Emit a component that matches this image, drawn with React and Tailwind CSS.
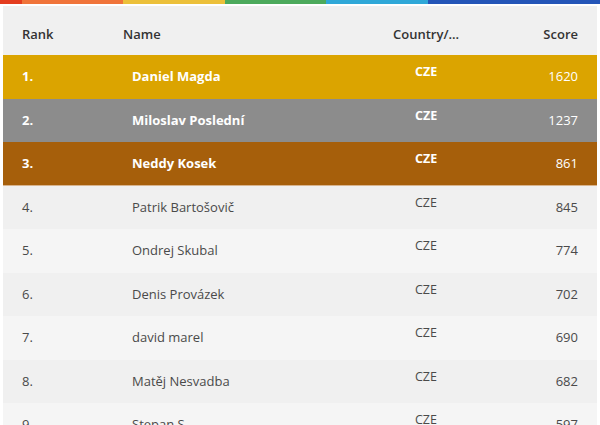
const rows = [
  { rank: 1, name: 'Daniel Magda', score: 1620, top: true, tone: 'bg-[#dba400] text-white font-bold' },
  { rank: 2, name: 'Miloslav Poslední', score: 1237, top: true, tone: 'bg-[#8c8c8c] text-white font-bold' },
  { rank: 3, name: 'Neddy Kosek', score: 861, top: true, tone: 'bg-[#a65f0b] text-white font-bold border-b border-[#d8b48e]' },
  { rank: 4, name: 'Patrik Bartošovič', score: 845, tone: 'bg-[#f0f0f0] text-[#4a4a4a]' },
  { rank: 5, name: 'Ondrej Skubal', score: 774, tone: 'bg-[#f5f5f5] text-[#4a4a4a]' },
  { rank: 6, name: 'Denis Provázek', score: 702, tone: 'bg-[#f0f0f0] text-[#4a4a4a]' },
  { rank: 7, name: 'david marel', score: 690, tone: 'bg-[#f5f5f5] text-[#4a4a4a]' },
  { rank: 8, name: 'Matěj Nesvadba', score: 682, tone: 'bg-[#f0f0f0] text-[#4a4a4a]' },
  { rank: 9, name: 'Stepan S.', score: 597, tone: 'bg-[#f5f5f5] text-[#4a4a4a]' },
];

export default function App() {
  return (
    <div className="w-[600px] h-[425px] overflow-hidden bg-white font-['Open_Sans',sans-serif] text-[13px]">
      <div className="flex h-[4px]">
        <div className="w-[22px] bg-[#e43d1f]" />
        <div className="w-[101px] bg-[#f0743a]" />
        <div className="w-[102px] bg-[#ecc03a]" />
        <div className="w-[101px] bg-[#4caa5c]" />
        <div className="w-[102px] bg-[#2fa8d8]" />
        <div className="flex-1 bg-[#2455b8]" />
      </div>
      <div className="mx-[3px] mt-[2px]">
        <div className="flex items-center h-[49px] bg-[#f0f0f0] text-[#333] font-semibold px-[19px] pt-[8px]">
          <div className="w-[101px]">Rank</div>
          <div className="w-[270px]">Name</div>
          <div className="w-[80px]">Country/...</div>
          <div className="flex-1 text-right">Score</div>
        </div>
        {rows.map((r) => (
          <div key={r.rank} className={`flex items-center h-[43.5px] px-[19px] ${r.tone}`}>
            <div className="w-[110px]">{r.rank}.</div>
            <div className="w-[283px]">{r.name}</div>
            <div className={`w-[60px] mb-[8px] text-[12.5px] ${r.top ? 'font-bold' : 'font-normal'}`}>CZE</div>
            <div className="flex-1 text-right font-normal">{r.score}</div>
          </div>
        ))}
      </div>
    </div>
  );
}
